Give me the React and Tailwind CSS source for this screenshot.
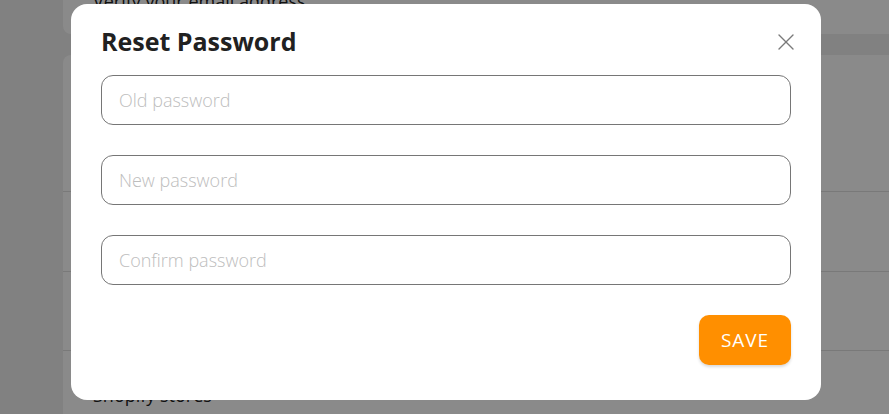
import { X } from "lucide-react";

const fields = ["Old password", "New password", "Confirm password"];

const Background = () => (
  <div className="flex h-[414px] w-full bg-[#eeeeee] pl-[63px]">
    <div className="flex flex-1 flex-col">
      <div className="mt-[-30px] h-[64px] rounded-bl-[8px] bg-white px-[30px] pt-[18px] text-[18px] text-[#222]">
        Verify your email address
      </div>
      <div className="mt-[21px] flex-1 rounded-tl-[8px] bg-white">
        <div className="h-[137px] border-b border-[#e0e0e0]" />
        <div className="h-[80px] border-b border-[#e0e0e0]" />
        <div className="h-[79px] border-b border-[#e0e0e0]" />
        <div className="px-[30px] pt-[31px] text-[18px] text-[#222]">Shopify stores</div>
      </div>
    </div>
  </div>
);

export default function App() {
  return (
    <div
      className="relative h-[414px] w-full overflow-hidden"
      style={{ fontFamily: '"Open Sans", "Noto Sans", sans-serif' }}
    >
      <Background />
      <div className="absolute inset-0 bg-black/[0.46]">
        <div className="ml-[71px] mt-[4px] w-[750px] rounded-[16px] bg-white px-[30px] pb-[35px] pt-[21px]">
          <div className="flex h-[33px] items-center justify-between">
            <h2 className="text-[25px] font-bold leading-[33px] text-[#212121]">Reset Password</h2>
            <button className="mr-[-9px] flex h-[28px] w-[28px] items-center justify-center text-[#7a7a7a]">
              <X size={28} strokeWidth={1.2} />
            </button>
          </div>
          <div className="mt-[17px] flex flex-col gap-[30px]">
            {fields.map((f) => (
              <input
                key={f}
                type="password"
                placeholder={f}
                className="h-[50px] w-full rounded-[12px] border border-[#767676] px-[17px] text-[18px] font-light text-[#212121] outline-none placeholder:text-[#bdbdbd]"
              />
            ))}
          </div>
          <div className="mt-[30px] flex justify-end">
            <button className="h-[50px] w-[92px] rounded-[10px] bg-[#ff8f00] text-[19px] font-medium tracking-[0.05em] text-white shadow-[0_2px_3px_rgba(0,0,0,0.15)]">
              SAVE
            </button>
          </div>
        </div>
      </div>
    </div>
  );
}
